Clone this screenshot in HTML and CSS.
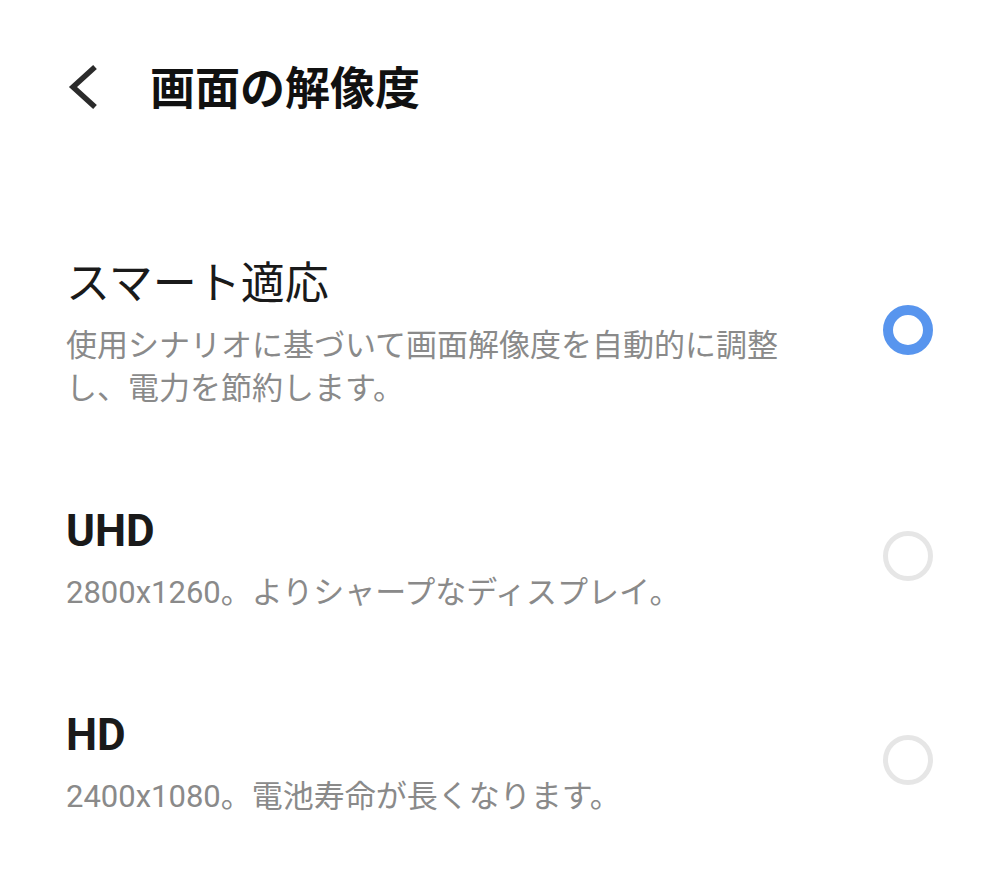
FILE: index.html
```html
<!DOCTYPE html>
<html lang="ja">
<head>
  <meta charset="utf-8">
  <title>画面の解像度</title>
  <link rel="stylesheet" href="styles.css">
</head>
<body>
  <div class="header">
    <svg class="back" width="30" height="46" viewBox="0 0 30 46">
      <polyline points="27,3 5,23 27,43" fill="none" stroke="#2b2b2b" stroke-width="5.5"/>
    </svg>
    <h1>画面の解像度</h1>
  </div>

  <div class="list">
    <div class="option">
      <div class="text">
        <div class="name light">スマート適応</div>
        <div class="desc">使用シナリオに基づいて画面解像度を自動的に調整し、電力を節約します。</div>
      </div>
      <div class="radio checked"></div>
    </div>

    <div class="option">
      <div class="text">
        <div class="name">UHD</div>
        <div class="desc">2800x1260。よりシャープなディスプレイ。</div>
      </div>
      <div class="radio"></div>
    </div>

    <div class="option">
      <div class="text">
        <div class="name">HD</div>
        <div class="desc">2400x1080。電池寿命が長くなります。</div>
      </div>
      <div class="radio"></div>
    </div>
  </div>
</body>
</html>
```

FILE: styles.css
```css
body {
  margin: 0;
  background: #ffffff;
  font-family: Roboto, "Noto Sans CJK JP", sans-serif;
  color: #1a1a1a;
}
.header {
  display: flex;
  align-items: center;
  padding: 60px 0 0 68px;
  height: 60px;
}
.back {
  display: block;
  margin-top: -6px;
}
.header h1 {
  margin: 0 0 0 52px;
  font-size: 45px;
  line-height: 60px;
  font-weight: 700;
  color: #111111;
}
.list {
  display: flex;
  flex-direction: column;
  gap: 93px;
  padding: 136px 67px 0 66px;
}
.option {
  display: flex;
  align-items: center;
  gap: 40px;
}
.text {
  flex: 1;
}
.name {
  font-size: 44px;
  line-height: 56px;
  font-weight: 700;
  color: #1a1a1a;
}
.name.light {
  font-weight: 400;
}
.desc {
  margin-top: 12px;
  font-size: 31px;
  line-height: 43px;
  color: #8a8a8a;
  max-width: 720px;
}
.radio {
  width: 50px;
  height: 50px;
  box-sizing: border-box;
  border: 5px solid #e6e6e6;
  border-radius: 50%;
  margin-top: -6px;
}
.radio.checked {
  border: 10px solid #5895ee;
}
```
